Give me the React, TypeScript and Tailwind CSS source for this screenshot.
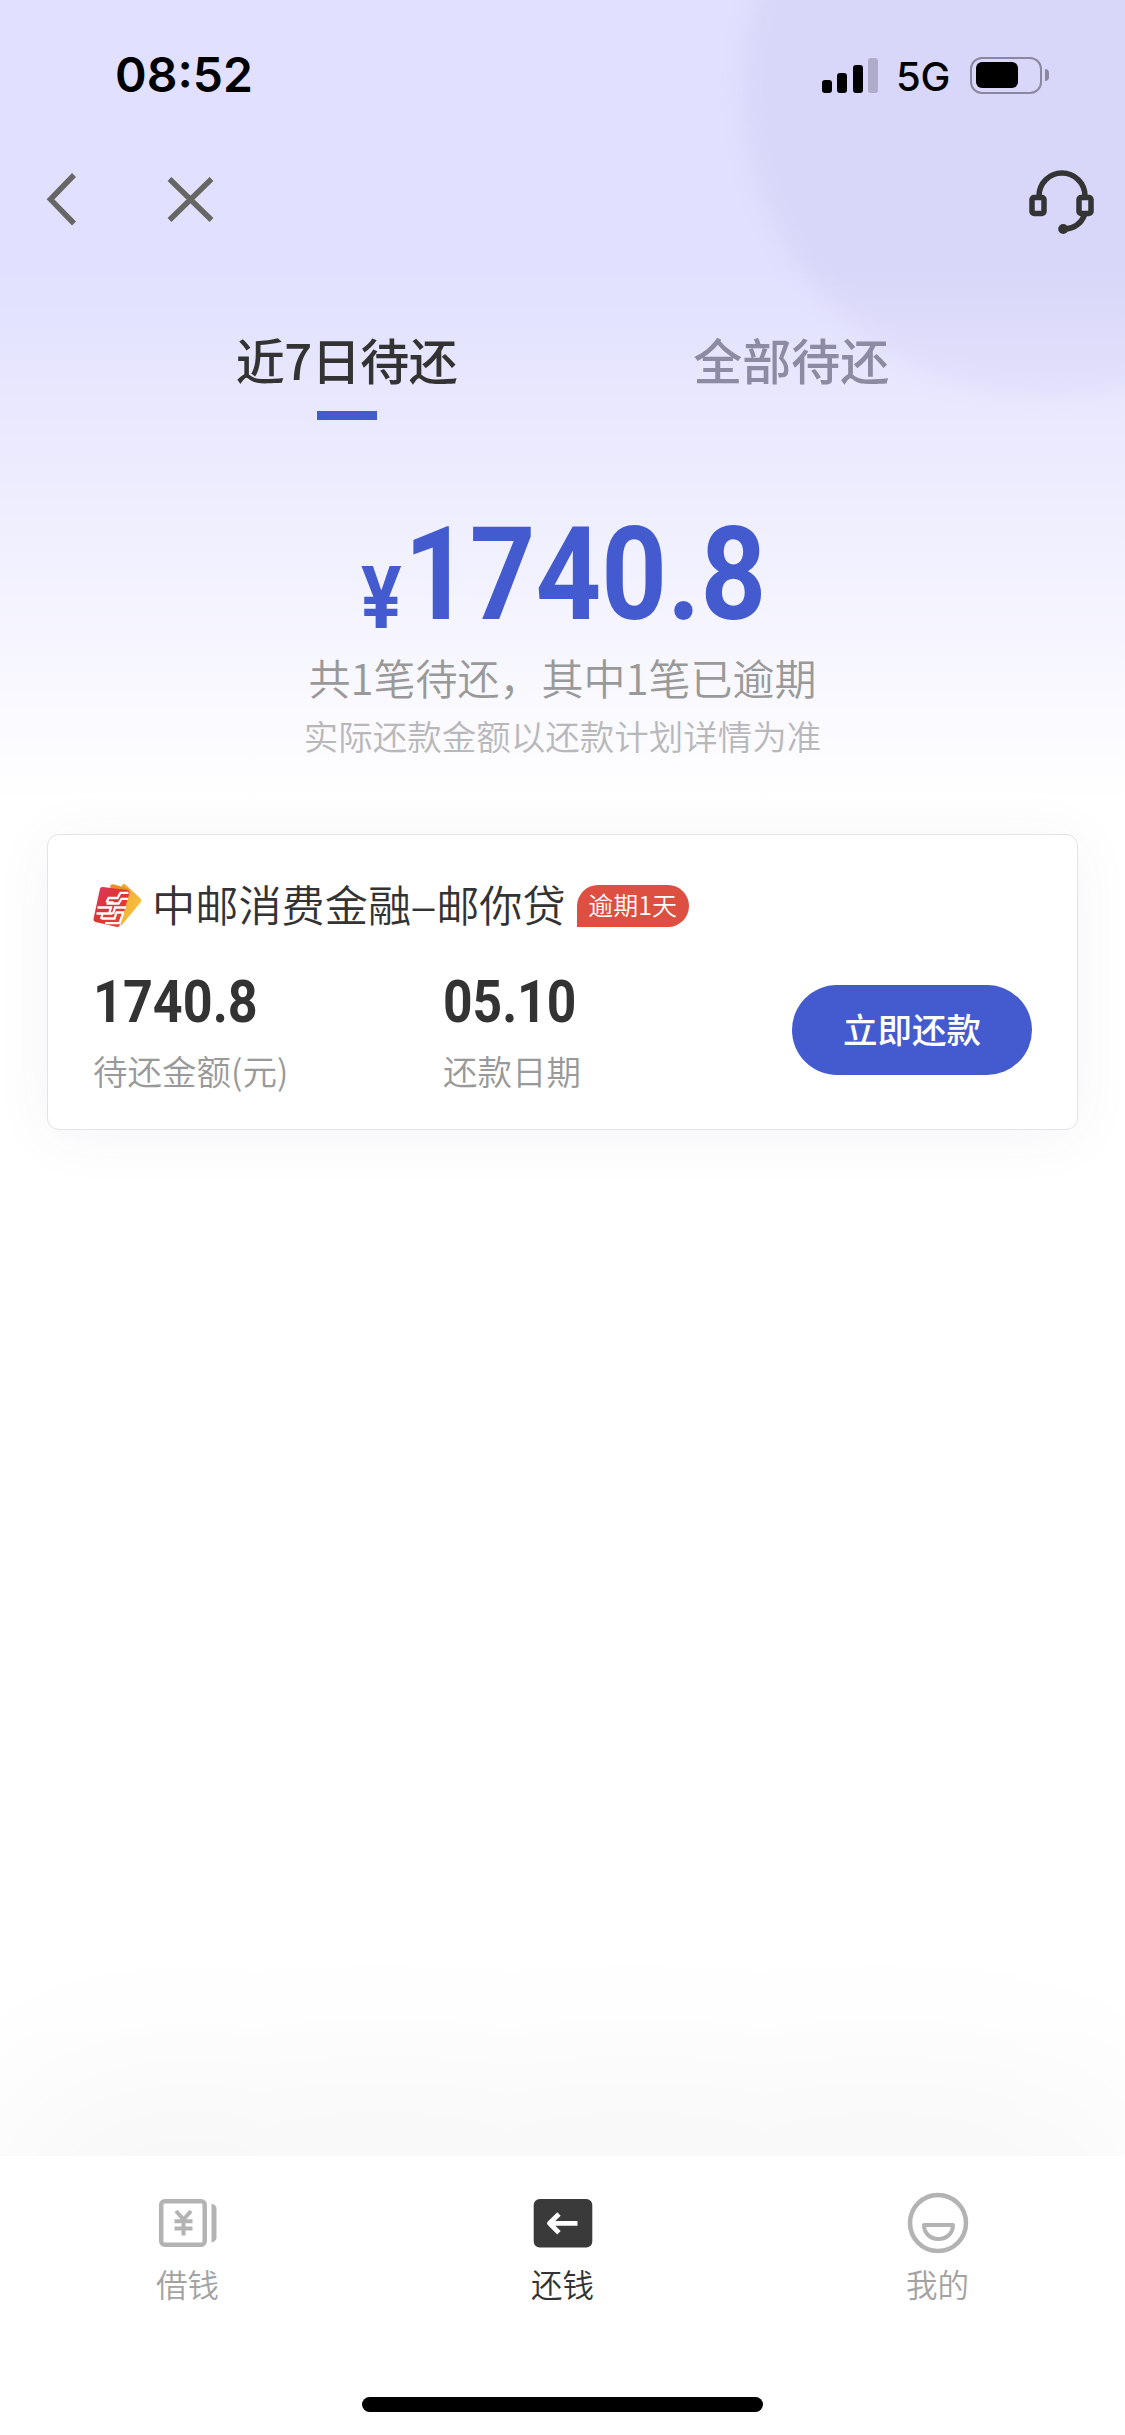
import React from "react";

function StatusBar() {
  return (
    <div className="flex h-[138px] items-center pl-[115px] pr-[76px] pt-[12px]">
      <div className="font-['Inter'] text-[48px] leading-[60px] font-semibold text-black">08:52</div>
      <div className="ml-auto flex items-center">
        <div className="flex h-[35px] items-end gap-[5.5px]">
          <i className="h-[13px] w-[10px] rounded-[3px] bg-black" />
          <i className="h-[20px] w-[10px] rounded-[3px] bg-black" />
          <i className="h-[28px] w-[10px] rounded-[3px] bg-black" />
          <i className="h-[35px] w-[10px] rounded-[3px] bg-[#aeacca]" />
        </div>
        <div className="ml-[18px] mt-[3px] w-[54px] font-['Inter'] text-[40px] leading-[50px] font-[450] tracking-[-0.3px] text-black">5G</div>
        <div className="ml-[20px] flex h-[37px] w-[72px] rounded-[12px] border-[2.5px] border-[#8a88a0] p-[3.5px]">
          <i className="w-[42px] rounded-[6px] bg-black" />
        </div>
        <i className="ml-[3px] h-[12px] w-[4px] rounded-r-full bg-[#8a88a0]" />
      </div>
    </div>
  );
}

function NavBar() {
  return (
    <div className="flex h-[122px] items-center pl-[42px] pr-[28px]">
      <svg width="40" height="60" viewBox="0 0 40 60" fill="none" stroke="#666664" strokeWidth="5.500">
        <path d="M32 6 8.500 30.300 32 54.500" />
      </svg>
      <svg className="ml-[80px]" width="60" height="60" viewBox="0 0 60 60" fill="none" stroke="#666664" strokeWidth="5.500">
        <path d="M7.500 10 49.500 51M49.500 10 7.500 51" />
      </svg>
      <svg className="ml-auto" width="70" height="74" viewBox="0 0 70 74" fill="none" stroke="#343434" strokeWidth="5.500">
        <path d="M12 35v-1a23 23 0 0 1 46 0v1" />
        <rect x="5" y="35.500" width="12" height="16" rx="2" />
        <rect x="52" y="35.500" width="12" height="16" rx="2" />
        <path d="M57.500 53C54 62 47 66.500 37 67.300" />
        <circle cx="36.200" cy="67" r="5" fill="#343434" stroke="none" />
      </svg>
    </div>
  );
}

function PostLogo() {
  return (
    <svg width="50" height="46" viewBox="0 0 50 46" className="mt-[5px] shrink-0">
      <defs>
        <linearGradient id="card" x1="0" y1="0" x2="1" y2="1">
          <stop offset="0" stopColor="#dc3a6c" />
          <stop offset="0.450" stopColor="#e0332f" />
          <stop offset="1" stopColor="#ec4a33" />
        </linearGradient>
        <linearGradient id="gold" x1="0" y1="0" x2="1" y2="1">
          <stop offset="0" stopColor="#f0a63a" />
          <stop offset="1" stopColor="#f8ca3c" />
        </linearGradient>
      </defs>
      <path d="M29 2q2-2 4 0L47.500 15.500q1.500 2 0 4L28 43z" fill="url(#gold)" />
      <path d="M17 3q1-2.500 4-1.500L34 5q3 1 2 4L27 42z" fill="#e88f2c" />
      <path d="M7 5.500q.5-2 3-1.500L34 7q3 .5 2.500 3L27 42q-1 2.500-3 2L2.500 39Q0 38 .5 36z" fill="url(#card)" />
      <g fill="none" stroke="#fff" strokeWidth="2.300">
        <path d="M35.500 9.800H27.500L24.500 15H15.500L13.500 19.500M35 15.800H28.500L25.500 20.500H13.500M13.500 19.500h7M4.500 24.500H18L16 31M21 24.500H33M31 29.500H23.500L21.500 35.500H8.500M3.500 30.500H19.500M9.500 31 8 36M22 24.500 20 31M30 30.500 26.500 40.200H12" />
      </g>
    </svg>
  );
}

function LendIcon() {
  return (
    <svg width="62" height="62" viewBox="0 0 62 62" fill="none" stroke="#b3b3b3" strokeWidth="4.500">
      <rect x="4.200" y="9.200" width="43.500" height="43.500" rx="3.500" />
      <path d="M19 19l7.500 8.500L34 19M17.500 29.200h18M17.500 36.500h18M26.500 28v15.500" strokeWidth="4" />
      <path d="M54.500 11.500q5 1.500 5 5v29q0 3.500-5 5z" fill="#b3b3b3" stroke="none" />
    </svg>
  );
}

function RepayIcon() {
  return (
    <svg width="62" height="62" viewBox="0 0 62 62" fill="none">
      <rect x="1.700" y="7" width="58.600" height="48.500" rx="6" fill="#3a3a3a" />
      <path d="M45.500 31.300H18M27 22 17.500 31.300 27 40.700" stroke="#fff" strokeWidth="4.800" strokeLinejoin="round" />
    </svg>
  );
}

function MineIcon() {
  return (
    <svg width="62" height="62" viewBox="0 0 62 62" fill="none" stroke="#b3b3b3" strokeWidth="4.500" strokeLinejoin="round">
      <circle cx="31" cy="31" r="28" />
      <path d="M17 33h29c0 8-6 14-14.500 14s-14.500-6-14.500-14z" strokeWidth="4" />
    </svg>
  );
}

const navItems = [
  { label: "借钱", icon: <LendIcon />, active: false },
  { label: "还钱", icon: <RepayIcon />, active: true },
  { label: "我的", icon: <MineIcon />, active: false },
];

export default function App() {
  return (
    <div className="relative flex h-[2435px] w-[1125px] flex-col overflow-hidden bg-white font-['Noto_Sans_CJK_SC',sans-serif] text-[#333]">
      <div className="absolute inset-x-0 top-0 h-[830px] overflow-hidden bg-[#e1e0fe]">
        <div className="absolute top-[-216px] left-[742px] h-[612px] w-[612px] rounded-full bg-[#d9d7f9] blur-[10px]" />
        <div className="absolute inset-x-0 top-[265px] bottom-0 bg-linear-to-b from-white/0 to-white to-[95%]" />
      </div>

      <div className="relative flex flex-1 flex-col">
        <StatusBar />
        <NavBar />

        <div className="mt-[69px] flex justify-evenly text-[49px] leading-[60px] font-medium">
          <div className="flex flex-col items-center tracking-[-0.5px]">
            近7日待还
            <i className="mt-[22px] h-[9px] w-[60px] bg-[#445bd0]" />
          </div>
          <div className="text-[#8d8aa3]">全部待还</div>
        </div>

        <div className="mt-[80px] flex h-[140px] items-baseline pl-[361px] font-['Roboto'] font-bold text-[#445bd0]">
          <span className="inline-block w-[43px] origin-left translate-y-[9px] scale-x-[0.87] text-[87px] leading-[140px]">¥</span>
          <span className="inline-block origin-left scale-x-[0.882] text-[130px] leading-[150px]">1740.8</span>
        </div>

        <div className="mt-[7px] text-center text-[42px] leading-[60px] font-[350] text-[#999]">共1笔待还，其中1笔已逾期</div>
        <div className="text-center text-[34.5px] leading-[57px] font-[350] text-[#b8b8bb]">实际还款金额以还款计划详情为准</div>

        <div className="mx-[47px] mt-[70px] h-[296px] rounded-[12px] border border-[#e3e3e8] bg-white px-[45px] pt-[38px] shadow-[0_6px_60px_rgba(60,70,140,0.06)]">
          <div className="flex h-[60px] items-center">
            <PostLogo />
            <div className="ml-[9px] text-[43.2px] leading-[60px] font-[350] whitespace-nowrap">
              中邮消费金融<span className="inline-block w-[25px] scale-x-[1.15] text-center">–</span>邮你贷
            </div>
            <div className="mt-[6px] ml-[11px] h-[42px] w-[112px] rounded-[21px] rounded-bl-none bg-[#dd4f41] text-center text-[25px] leading-[38px] font-[350] text-white">逾期1天</div>
          </div>
          <div className="flex">
            <div className="w-[350px]">
              <div className="mt-[34px] origin-left scale-x-[0.89] font-['Roboto'] text-[58.6px] leading-[70px] font-bold">1740.8</div>
              <div className="mt-[8px] text-[34.5px] leading-[50px] font-[350] text-[#999]">待还金额(元)</div>
            </div>
            <div>
              <div className="mt-[34px] w-[200px] origin-left scale-x-[0.88] font-['Roboto'] text-[58.6px] leading-[70px] font-bold">05.10</div>
              <div className="mt-[8px] text-[34.5px] leading-[50px] font-[350] text-[#999]">还款日期</div>
            </div>
            <div className="mt-[52px] ml-auto h-[90px] w-[240px] rounded-full bg-[#445bd0] text-center text-[34.5px] leading-[86px] font-medium text-white">立即还款</div>
          </div>
        </div>

        <div className="mt-auto flex h-[279px] flex-col items-center bg-white shadow-[0_-75px_195px_rgba(0,0,0,0.04)]">
          <div className="grid w-full grid-cols-3 pt-[36px]">
            {navItems.map((item) => (
              <div key={item.label} className="flex flex-col items-center">
                {item.icon}
                <div className={item.active ? "mt-[6px] text-[31.5px] leading-[46px] font-[350] text-[#333]" : "mt-[6px] text-[31.5px] leading-[46px] font-[350] text-[#a3a3a3]"}>{item.label}</div>
              </div>
            ))}
          </div>
          <div className="mt-[91px] h-[15px] w-[401px] rounded-full bg-black" />
        </div>
      </div>
    </div>
  );
}
